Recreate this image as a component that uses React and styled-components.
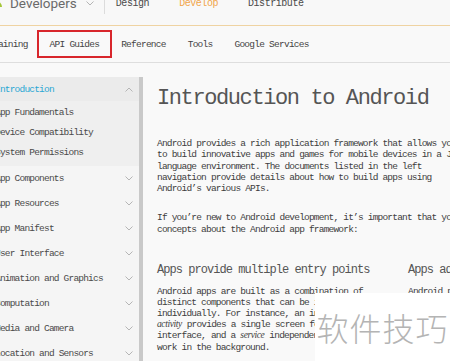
import styled, { createGlobalStyle } from "styled-components";

const GlobalStyle = createGlobalStyle`
  html, body {
    margin: 0;
    padding: 0;
    background: #f9f9f9;
    overflow: hidden;
  }
  body {
    width: 450px;
    height: 361px;
  }
`;

const mono = `"Liberation Mono", "DejaVu Sans Mono", monospace`;

const sideItems = [
  "App Components",
  "App Resources",
  "App Manifest",
  "User Interface",
  "Animation and Graphics",
  "Computation",
  "Media and Camera",
  "Location and Sensors",
];

const subItems = ["App Fundamentals", "Device Compatibility", "System Permissions"];

const Chevron = ({ up }) => (
  <svg width="8" height="5" viewBox="0 0 8 5">
    <path
      d={up ? "M0.5 4.5 L4 1 L7.5 4.5" : "M0.5 0.5 L4 4 L7.5 0.5"}
      fill="none"
      stroke="#b5b5b5"
      strokeWidth="1"
    />
  </svg>
);

const App = () => (
  <Page>
    <GlobalStyle />
    <Header>
      <Brand>
        <Logo>
          <svg width="14" height="12" viewBox="0 0 14 12">
            <path d="M1 10 A6 6 0 0 1 13 10 Z" fill="#a4c639" />
          </svg>
        </Logo>
        <BrandName>Developers</BrandName>
        <Chevron />
      </Brand>
      <Divider />
      <TopLinks>
        <TopLink>Design</TopLink>
        <TopLink $active>Develop</TopLink>
        <TopLink>Distribute</TopLink>
      </TopLinks>
    </Header>
    <SubNav>
      <SubLink>Training</SubLink>
      <SubLink $active>API Guides</SubLink>
      <SubLink>Reference</SubLink>
      <SubLink>Tools</SubLink>
      <SubLink>Google Services</SubLink>
    </SubNav>
    <Body>
      <Sidebar>
        <SideRow $open>
          <span>Introduction</span>
          <Chevron up />
        </SideRow>
        <SubList>
          {subItems.map((s) => (
            <SubRow key={s}>{s}</SubRow>
          ))}
        </SubList>
        {sideItems.map((s) => (
          <SideRow key={s}>
            <span>{s}</span>
            <Chevron />
          </SideRow>
        ))}
      </Sidebar>
      <Main>
        <Title>Introduction to Android</Title>
        <Para $width="311px">
          Android provides a rich application framework that allows you to
          build innovative apps and games for mobile devices in a Java
          language environment. The documents listed in the left navigation
          provide details about how to build apps using Android’s various
          APIs.
        </Para>
        <Para $width="500px">
          If you’re new to Android development, it’s important that you
          understand the following fundamental concepts about the Android app
          framework:
        </Para>
        <Columns>
          <div>
            <ColTitle>Apps provide multiple entry points</ColTitle>
            <ColText>
              Android apps are built as a combination of distinct components
              that can be invoked individually. For instance, an individual{" "}
              <Em>activity</Em> provides a single screen for a user interface,
              and a <Em>service</Em> independently performs work in the
              background.
            </ColText>
          </div>
          <div>
            <ColTitle>Apps adapt to different devices</ColTitle>
            <ColText>
              Android provides an adaptive app framework that allows you to
              provide unique resources for different device configurations.
            </ColText>
          </div>
        </Columns>
      </Main>
    </Body>
    <Watermark>软件技巧</Watermark>
  </Page>
);

export default App;

const Page = styled.div`
  position: relative;
  width: 450px;
  height: 361px;
  overflow: hidden;
`;

const Header = styled.div`
  display: flex;
  align-items: flex-start;
  height: 25px;
  border-bottom: 1px solid #efd3a2;
  background: #f8f8f8;
`;

const Brand = styled.div`
  display: flex;
  align-items: center;
  margin-top: -7px;
  margin-left: -11px;
  height: 20px;
`;

const Logo = styled.div`
  width: 14px;
  display: flex;
  margin-right: 7px;
`;

const BrandName = styled.span`
  font-family: Roboto, "Noto Sans", sans-serif;
  font-size: 13.5px;
  color: #6a6a6a;
  margin-right: 9px;
`;

const Divider = styled.div`
  width: 1px;
  height: 14px;
  background: #dcdcdc;
  margin-left: 10px;
`;

const TopLinks = styled.div`
  display: flex;
  gap: 30px;
  margin-left: 11px;
  margin-top: -3px;
`;

const TopLink = styled.span`
  font-family: ${mono};
  font-size: 10px;
  letter-spacing: -0.45px;
  line-height: 14px;
  color: ${(p) => (p.$active ? "#f1a54a" : "#4a4a4a")};
`;

const SubNav = styled.div`
  display: flex;
  align-items: center;
  height: 36px;
  margin-left: -23px;
  border-bottom: 1px solid #dedede;
`;

const SubLink = styled.span`
  display: flex;
  align-items: center;
  height: 24px;
  padding: 0 11px;
  font-family: ${mono};
  font-size: 9.5px;
  letter-spacing: -0.75px;
  color: #444;
  outline: ${(p) => (p.$active ? "2px solid #d8262c" : "none")};
`;

const Body = styled.div`
  display: flex;
  align-items: flex-start;
  margin-top: 14px;
`;

const Sidebar = styled.div`
  flex: none;
  width: 159px;
  margin-left: -20px;
  min-height: 290px;
  background: #f5f5f5;
  border-right: 4px solid #c9c9c9;
  font-family: ${mono};
  font-size: 9.5px;
  letter-spacing: -0.8px;
  color: #4a4a4a;
`;

const SideRow = styled.div`
  display: flex;
  align-items: center;
  justify-content: space-between;
  height: ${(p) => (p.$open ? "24px" : "25px")};
  padding: 0 6px 0 15px;
  background: ${(p) => (p.$open ? "#ebebeb" : "#f5f5f5")};
  color: ${(p) => (p.$open ? "#2aa7d4" : "#4a4a4a")};
`;

const SubList = styled.div`
  background: #efefef;
  padding: 1px 0 4px;
`;

const SubRow = styled.div`
  display: flex;
  align-items: center;
  height: 20px;
  padding-left: 15px;
`;

const Main = styled.div`
  flex: 1;
  padding-left: 14px;
  font-family: ${mono};
  color: #3e3e3e;
`;

const Title = styled.h1`
  margin: 9px 0 26px;
  font-family: ${mono};
  font-weight: normal;
  font-size: 22px;
  letter-spacing: -1.4px;
  line-height: 26px;
  color: #555;
  white-space: nowrap;
`;

const Para = styled.p`
  width: ${(p) => p.$width};
  margin: 0 0 18px;
  font-size: 9.5px;
  letter-spacing: -0.8px;
  line-height: 11.3px;
`;

const Columns = styled.div`
  display: grid;
  grid-template-columns: 226px 220px;
  column-gap: 25px;
  width: 471px;
  margin-top: 28px;
`;

const ColTitle = styled.h2`
  margin: 0 0 9px;
  font-family: ${mono};
  font-weight: normal;
  font-size: 12px;
  letter-spacing: -0.95px;
  line-height: 14px;
  color: #555;
  white-space: nowrap;
`;

const ColText = styled.p`
  margin: 0;
  font-size: 9.5px;
  letter-spacing: -0.8px;
  line-height: 11.1px;
`;

const Em = styled.em`
  font-family: "Liberation Serif", serif;
  font-size: 9.5px;
  letter-spacing: -0.4px;
  line-height: inherit;
`;

const Watermark = styled.div`
  position: absolute;
  right: 0;
  bottom: 0;
  width: 135px;
  height: 68px;
  background: #fff;
  display: flex;
  align-items: center;
  justify-content: center;
  font-family: "Noto Sans CJK SC", sans-serif;
  font-weight: 300;
  font-size: 32px;
  letter-spacing: 1px;
  color: #b4b4b4;
`;
